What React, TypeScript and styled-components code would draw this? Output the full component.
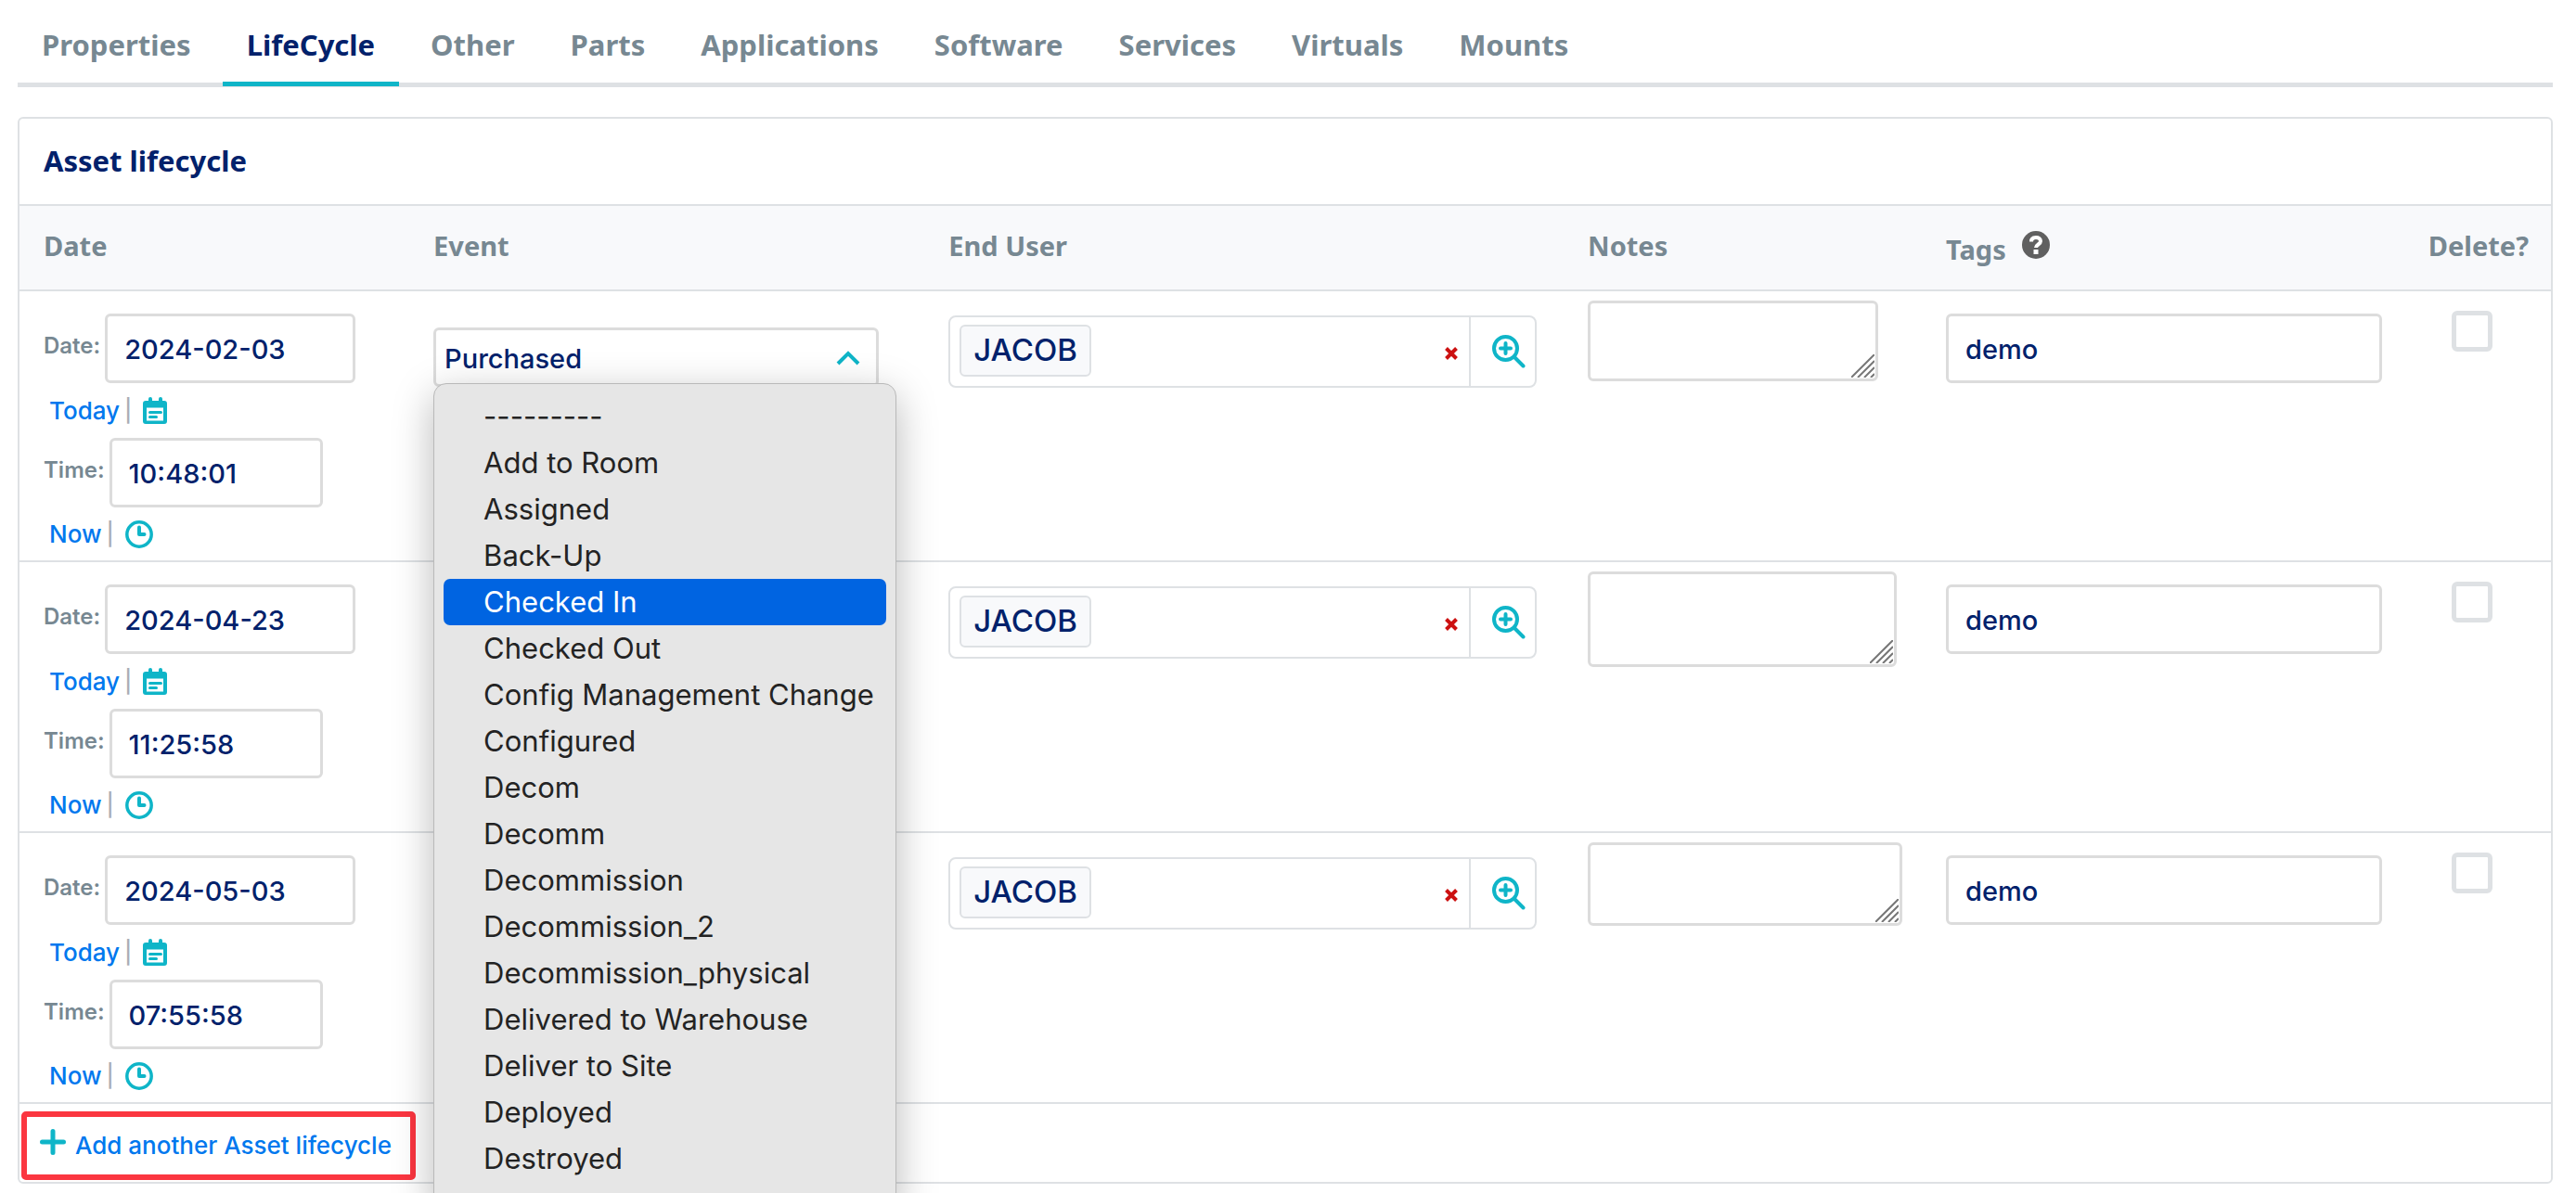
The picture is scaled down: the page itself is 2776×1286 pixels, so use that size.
import React from "react";
import styled, { createGlobalStyle } from "styled-components";

const color = {
  navy: "#01216b",
  slate: "#778892",
  line: "#dee1e4",
  field: "#dcdcdc",
  pale: "#f8f9fb",
  teal: "#0fb5c8",
  link: "#0078ee",
  red: "#cc1111",
  callout: "#fb3640",
};

const heading = `"Noto Sans", sans-serif`;
const body = `Inter, sans-serif`;

const GlobalStyle = createGlobalStyle`
  *, *::before, *::after { box-sizing: border-box; }
  body { margin: 0; background: #fff; color: ${color.navy}; font-family: ${body}; }
  button, input, select, textarea { font: inherit; color: inherit; }
`;

const Page = styled.main`
  min-height: 100vh;
  padding: 0 25px 0 19px;
  overflow: hidden;
`;

const Tabs = styled.nav`
  display: flex;
  gap: 8px;
  border-bottom: 5px solid ${color.line};
`;

const Tab = styled.a<{ $active?: boolean }>`
  margin-bottom: -4px;
  padding: 26px 26px 18px;
  border-bottom: 5px solid ${(p) => (p.$active ? color.teal : "transparent")};
  color: ${(p) => (p.$active ? color.navy : color.slate)};
  font: 700 31px/44px ${heading};
  text-decoration: none;
  white-space: nowrap;
`;

const Panel = styled.section`
  margin-top: 32px;
  border: 2px solid ${color.line};
  border-radius: 6px;
`;

const PanelTitle = styled.h2`
  margin: 0;
  padding: 23px 26px 25px;
  border-bottom: 2px solid ${color.line};
  font: 700 31px/44px ${heading};
`;

const Table = styled.table`
  width: 100%;
  table-layout: fixed;
  border-collapse: separate;
  border-spacing: 0;
`;

const Col = styled.col<{ $share: number }>`
  width: ${(p) => p.$share}%;
`;

const Th = styled.th`
  height: 92px;
  padding: 0 0 5px 26px;
  border-bottom: 2px solid ${color.line};
  background: ${color.pale};
  color: ${color.slate};
  font: 700 29px/40px ${heading};
  text-align: left;
  white-space: nowrap;
`;

const TagsHead = styled.span`
  display: flex;
  align-items: center;
  gap: 17px;
  padding-top: 8px;
`;

const HelpButton = styled.button`
  display: flex;
  padding: 0 0 10px;
  border: 0;
  background: none;
`;

const Td = styled.td<{ $top?: number; $left?: number }>`
  padding: ${(p) => p.$top ?? 24}px 0 0 ${(p) => p.$left ?? 26}px;
  border-bottom: 2px solid ${color.line};
  vertical-align: top;
`;

const FieldLine = styled.div`
  display: flex;
  align-items: center;
  gap: 5px;
`;

const FieldLabel = styled.label`
  padding-bottom: 6px;
  color: ${color.slate};
  font: 600 24px/32px ${body};
`;

const TextInput = styled.input<{ $width: number }>`
  width: ${(p) => p.$width}px;
  height: 75px;
  padding: 2px 18px 0;
  border: 3px solid ${color.field};
  border-radius: 6px;
  background: #fff;
  font: 500 29px/36px ${body};
`;

const ShortcutLine = styled.div<{ $last?: boolean }>`
  display: flex;
  align-items: center;
  height: ${(p) => (p.$last ? 57 : 59)}px;
  padding: 1px 0 0 6px;
`;

const Shortcut = styled.a`
  color: ${color.link};
  font: 500 26px/34px ${body};
  text-decoration: none;
`;

const Divider = styled.span`
  padding: 0 12px 0 5px;
  color: #a9adb5;
  font: 500 24px/30px ${body};
`;

const IconButton = styled.button`
  display: flex;
  align-items: center;
  justify-content: center;
  padding: 0;
  border: 0;
  background: none;
  color: ${color.teal};
`;

const SelectBox = styled.div`
  position: relative;
  width: 480px;
  margin-top: 15px;
`;

const Select = styled.select`
  display: block;
  width: 100%;
  height: 64px;
  padding: 3px 11px 0 9px;
  border: 3px solid ${color.field};
  border-radius: 6px;
  background: #fff;
  font: 500 29px/36px ${body};
  appearance: none;
`;

const Chevron = styled.svg`
  position: absolute;
  top: 24px;
  right: 20px;
  pointer-events: none;
`;

const Menu = styled.ul`
  position: absolute;
  z-index: 2;
  top: 60px;
  left: 0;
  width: 499px;
  margin: 0;
  padding: 10px 10px 30px;
  border: 1px solid #b9b9b9;
  border-radius: 14px;
  background: #e6e6e6;
  box-shadow: 0 12px 44px rgba(0, 0, 0, 0.28);
  list-style: none;
`;

const MenuItem = styled.li<{ $active: boolean }>`
  padding: 0 0 0 43px;
  border-radius: 7px;
  background: ${(p) => (p.$active ? "#0064e1" : "transparent")};
  color: ${(p) => (p.$active ? "#fff" : "#232323")};
  font: 400 31px/50px ${body};
  white-space: nowrap;
`;

const Picker = styled.div`
  display: flex;
  width: 634px;
  height: 78px;
  border: 2px solid ${color.line};
  border-radius: 8px;
`;

const PickerValue = styled.div`
  display: flex;
  flex: 1;
  align-items: center;
  justify-content: space-between;
  padding: 0 11px 3px 10px;
`;

const Chip = styled.span`
  height: 56px;
  padding: 0 13px;
  border: 2px solid ${color.line};
  border-radius: 6px;
  background: ${color.pale};
  font: 500 33px/50px ${body};
`;

const ClearButton = styled(IconButton)`
  padding-top: 6px;
  color: ${color.red};
`;

const LookupButton = styled(IconButton)`
  width: 71px;
  padding-left: 13px;
  border-left: 2px solid ${color.line};
`;

const NoteBox = styled.div`
  position: relative;
  width: max-content;
`;

const Note = styled.textarea<{ $w: number; $h: number }>`
  display: block;
  width: ${(p) => p.$w}px;
  height: ${(p) => p.$h}px;
  padding: 12px 18px;
  border: 3px solid ${color.field};
  border-radius: 6px;
  font: 500 29px/36px ${body};
  resize: none;
`;

const Grip = styled.svg`
  position: absolute;
  right: 4px;
  bottom: 4px;
  pointer-events: none;
`;

const Checkbox = styled.input`
  display: block;
  width: 44px;
  height: 44px;
  margin: 0;
  border: 5px solid ${color.line};
  border-radius: 6px;
  background: #fff;
  appearance: none;
`;

const Footer = styled.div`
  display: flex;
  padding: 8px 2px 2px;
`;

const AddLink = styled.a`
  display: flex;
  align-items: center;
  gap: 10px;
  height: 74px;
  padding: 0 20px 0 14px;
  border: 6px solid ${color.callout};
  border-radius: 5px;
  color: ${color.link};
  font: 500 26px/34px ${body};
  text-decoration: none;
  white-space: nowrap;

  svg {
    margin-bottom: 8px;
  }
`;

const CalendarIcon = () => (
  <svg width="26" height="30" viewBox="0 0 26 30" aria-hidden="true">
    <path d="M8 2v5M19 2v5" stroke={color.teal} strokeWidth="4" strokeLinecap="round" />
    <path
      fillRule="evenodd"
      fill={color.teal}
      d="M3 4h20a3 3 0 0 1 3 3v19a3 3 0 0 1-3 3H3a3 3 0 0 1-3-3V7a3 3 0 0 1 3-3zm1 7.500v14h18v-14z"
    />
    <path d="M7.500 16.500h12M7.500 21.500h7" stroke={color.teal} strokeWidth="3" strokeLinecap="round" />
  </svg>
);

const ClockIcon = () => (
  <svg width="30" height="30" viewBox="0 0 30 30" fill="none" stroke={color.teal} aria-hidden="true">
    <circle cx="15" cy="15" r="13.200" strokeWidth="3.500" />
    <path d="M15 7.500v7.500h5.500" strokeWidth="4" strokeLinecap="round" strokeLinejoin="round" />
  </svg>
);

const CrossIcon = () => (
  <svg width="16" height="16" viewBox="0 0 16 16" aria-hidden="true">
    <path d="M2.500 2.500l11 11M13.500 2.500l-11 11" stroke="currentColor" strokeWidth="4" />
  </svg>
);

const LookupIcon = () => (
  <svg width="36" height="36" viewBox="0 0 36 36" fill="none" stroke="currentColor" strokeLinecap="round" aria-hidden="true">
    <circle cx="14.500" cy="14.500" r="12.500" strokeWidth="4" />
    <path d="M24 24l9.500 9.500M9 14.500h11M14.500 9v11" strokeWidth="4" />
  </svg>
);

const HelpIcon = () => (
  <svg width="30" height="30" viewBox="0 0 30 30" fill="none" aria-hidden="true">
    <circle cx="15" cy="15" r="15" fill="#606060" />
    <path d="M10 11.500c0-3 2-4.500 5-4.500s5 1.500 5 4c0 3.500-5 3.500-5 7" stroke="#fff" strokeWidth="4" />
    <path d="M12.500 20h5v5h-5z" fill="#fff" />
  </svg>
);

const PlusIcon = () => (
  <svg width="28" height="28" viewBox="0 0 28 28" aria-hidden="true">
    <path d="M14 2.500v23M2.500 14h23" stroke={color.teal} strokeWidth="5" strokeLinecap="round" />
  </svg>
);

const tabs = ["Properties", "LifeCycle", "Other", "Parts", "Applications", "Software", "Services", "Virtuals", "Mounts"];

const events = [
  "---------",
  "Add to Room",
  "Assigned",
  "Back-Up",
  "Checked In",
  "Checked Out",
  "Config Management Change",
  "Configured",
  "Decom",
  "Decomm",
  "Decommission",
  "Decommission_2",
  "Decommission_physical",
  "Delivered to Warehouse",
  "Deliver to Site",
  "Deployed",
  "Destroyed",
];

const entries = [
  { date: "2024-02-03", time: "10:48:01", note: [313, 87] },
  { date: "2024-04-23", time: "11:25:58", note: [333, 103] },
  { date: "2024-05-03", time: "07:55:58", note: [339, 90] },
];

type Entry = (typeof entries)[number];

function EntryRow({ entry, index }: { entry: Entry; index: number }) {
  const [w, h] = entry.note;
  return (
    <tr>
      <Td>
        <FieldLine>
          <FieldLabel htmlFor={`date-${index}`}>Date:</FieldLabel>
          <TextInput id={`date-${index}`} $width={270} defaultValue={entry.date} />
        </FieldLine>
        <ShortcutLine>
          <Shortcut href="#today">Today</Shortcut>
          <Divider>|</Divider>
          <IconButton aria-label="Choose a date">
            <CalendarIcon />
          </IconButton>
        </ShortcutLine>
        <FieldLine>
          <FieldLabel htmlFor={`time-${index}`}>Time:</FieldLabel>
          <TextInput id={`time-${index}`} $width={230} defaultValue={entry.time} />
        </FieldLine>
        <ShortcutLine $last>
          <Shortcut href="#now">Now</Shortcut>
          <Divider>|</Divider>
          <IconButton aria-label="Choose a time">
            <ClockIcon />
          </IconButton>
        </ShortcutLine>
      </Td>
      <Td>
        <SelectBox>
          <Select aria-label="Event" defaultValue="Purchased">
            {[...events, "Purchased"].map((name) => (
              <option key={name}>{name}</option>
            ))}
          </Select>
          <Chevron width="26" height="18" viewBox="0 0 26 18" fill="none">
            <path d="M2 15L13 4l11 11" stroke={color.teal} strokeWidth="4" />
          </Chevron>
          {index === 0 && (
            <Menu role="listbox" aria-label="Event choices">
              {events.map((name) => (
                <MenuItem key={name} role="option" aria-selected={name === "Checked In"} $active={name === "Checked In"}>
                  {name}
                </MenuItem>
              ))}
            </Menu>
          )}
        </SelectBox>
      </Td>
      <Td $top={26}>
        <Picker>
          <PickerValue>
            <Chip>JACOB</Chip>
            <ClearButton aria-label="Remove end user">
              <CrossIcon />
            </ClearButton>
          </PickerValue>
          <LookupButton aria-label="Look up end user">
            <LookupIcon />
          </LookupButton>
        </Picker>
      </Td>
      <Td $top={10}>
        <NoteBox>
          <Note aria-label="Notes" $w={w} $h={h} />
          <Grip width="25" height="25" viewBox="0 0 25 25" stroke="#777" strokeWidth="2">
            <path d="M0 25L25 0M7 25L25 7M14 25L25 14M21 25l4-4" />
          </Grip>
        </NoteBox>
      </Td>
      <Td>
        <TextInput aria-label="Tags" $width={470} defaultValue="demo" />
      </Td>
      <Td $top={21} $left={51}>
        <Checkbox type="checkbox" aria-label="Delete" />
      </Td>
    </tr>
  );
}

export default function App() {
  return (
    <>
      <GlobalStyle />
      <Page>
        <Tabs>
          {tabs.map((name) => (
            <Tab key={name} href={`#${name.toLowerCase()}`} $active={name === "LifeCycle"}>
              {name}
            </Tab>
          ))}
        </Tabs>
        <Panel>
          <PanelTitle>Asset lifecycle</PanelTitle>
          <Table>
            <colgroup>
              {[15.4, 20.35, 25.25, 14.15, 19.05, 5.8].map((share, i) => (
                <Col key={i} $share={share} />
              ))}
            </colgroup>
            <thead>
              <tr>
                <Th>Date</Th>
                <Th>Event</Th>
                <Th>End User</Th>
                <Th>Notes</Th>
                <Th>
                  <TagsHead>
                    Tags
                    <HelpButton aria-label="About tags">
                      <HelpIcon />
                    </HelpButton>
                  </TagsHead>
                </Th>
                <Th>Delete?</Th>
              </tr>
            </thead>
            <tbody>
              {entries.map((entry, index) => (
                <EntryRow key={entry.date} entry={entry} index={index} />
              ))}
            </tbody>
          </Table>
          <Footer>
            <AddLink href="#add">
              <PlusIcon />
              Add another Asset lifecycle
            </AddLink>
          </Footer>
        </Panel>
      </Page>
    </>
  );
}
